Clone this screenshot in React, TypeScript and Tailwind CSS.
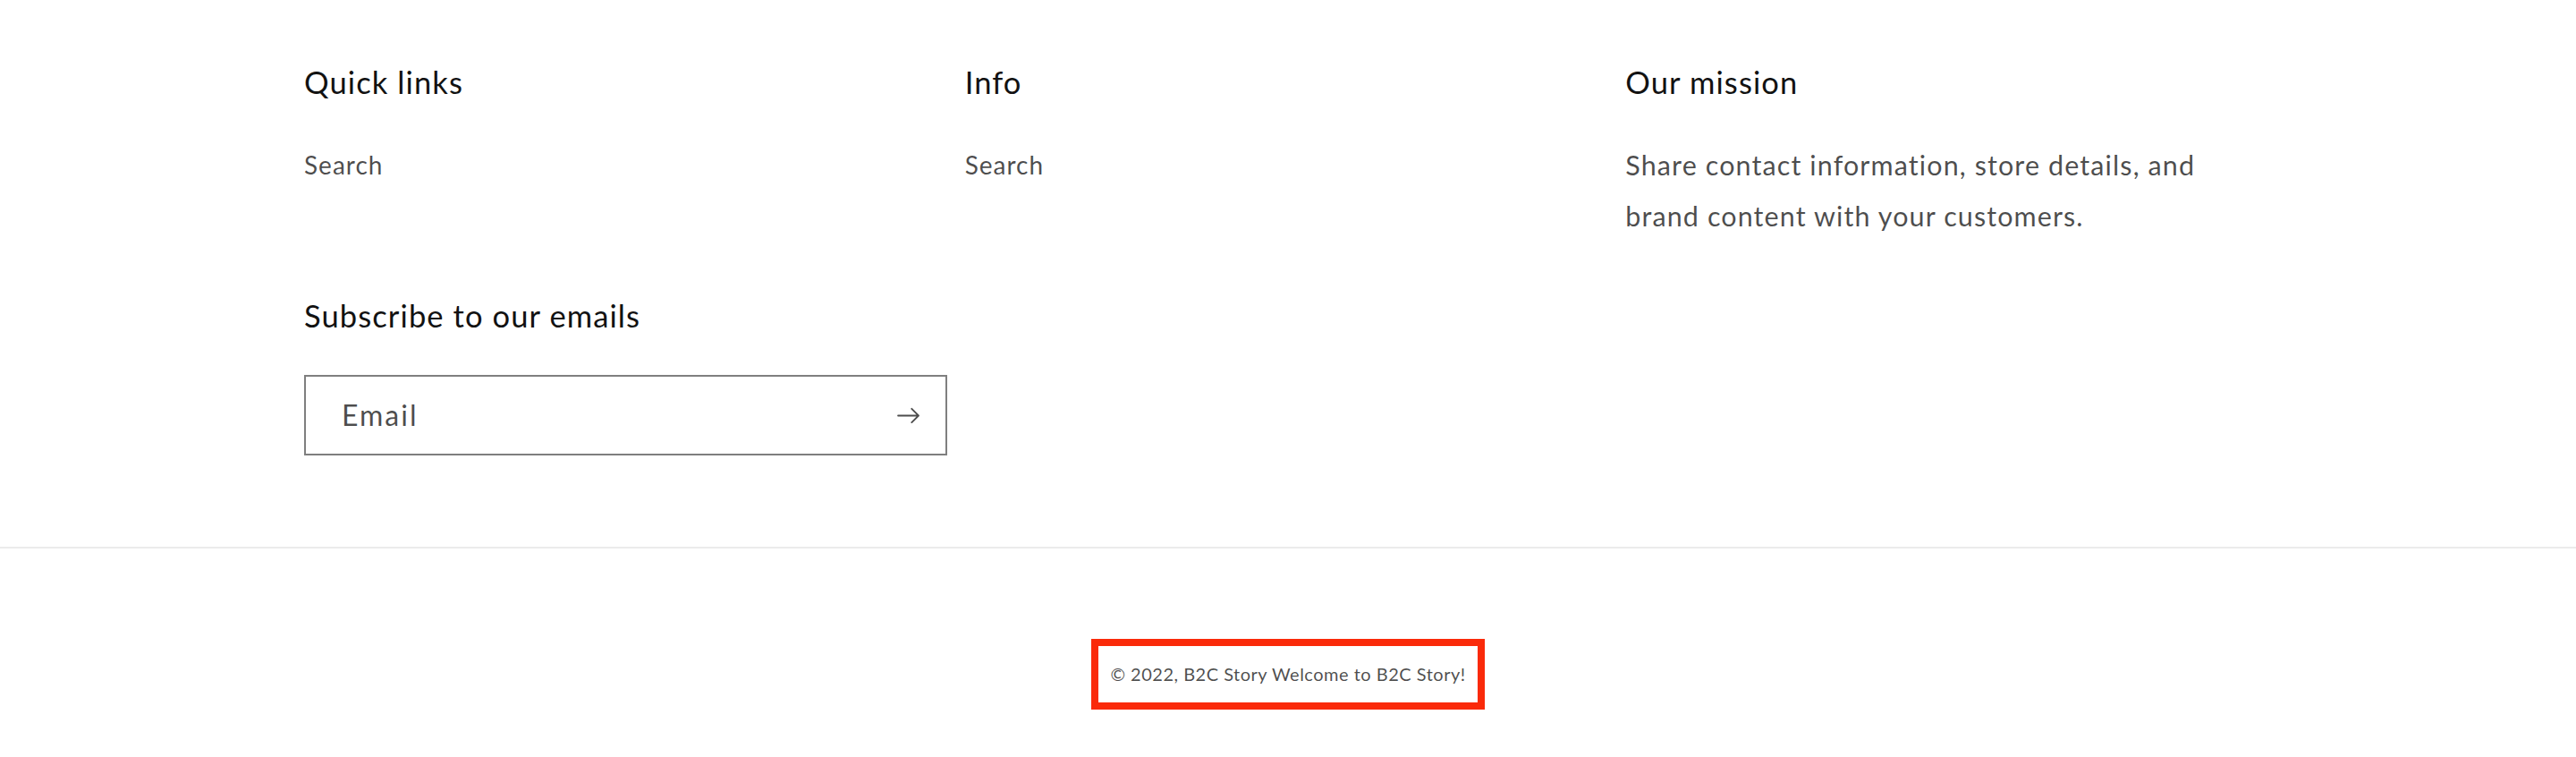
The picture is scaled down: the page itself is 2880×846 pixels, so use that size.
const ArrowIcon = () => (
  <svg viewBox="0 0 14 10" fill="none" className="w-[27px] h-[19px]">
    <path
      fillRule="evenodd"
      clipRule="evenodd"
      fill="currentColor"
      d="M8.537.808a.5.5 0 01.817-.162l4 4a.5.5 0 010 .708l-4 4a.5.5 0 11-.708-.708L11.793 5.5H1a.5.5 0 010-1h10.793L8.646 1.354a.5.5 0 01-.109-.546z"
    />
  </svg>
);

const App = () => {
  return (
    <footer className="w-full min-h-[846px] bg-white font-['Lato',sans-serif] text-[#121212]">
      <div className="mx-auto max-w-[2200px] pt-[68px]">
        <div className="grid grid-cols-3 gap-x-[16px]">
          {/* Quick links */}
          <div>
            <h2 className="text-[34.5px] leading-[48px] tracking-[1.1px]">Quick links</h2>
            <ul className="mt-[48px]">
              <li className="text-[28px] leading-[40px] tracking-[1px] text-[#121212bf]">Search</li>
            </ul>
          </div>

          {/* Info */}
          <div>
            <h2 className="text-[34.5px] leading-[48px] tracking-[1.1px]">Info</h2>
            <ul className="mt-[48px]">
              <li className="text-[28px] leading-[40px] tracking-[1px] text-[#121212bf]">Search</li>
            </ul>
          </div>

          {/* Our mission */}
          <div>
            <h2 className="text-[34.5px] leading-[48px] tracking-[1.1px]">Our mission</h2>
            <p className="mt-[40px] max-w-[680px] text-[30.5px] leading-[57px] tracking-[1.1px] text-[#121212bf]">
              Share contact information, store details, and brand content with your customers.
            </p>
          </div>
        </div>

        {/* Newsletter */}
        <div className="mt-[59px]">
          <h2 className="text-[34.5px] leading-[48px] tracking-[1.1px]">Subscribe to our emails</h2>
          <div className="mt-[42px] flex h-[90px] w-[719px] items-center justify-between border-2 border-[#7f7f7f] pl-[40px] pr-[28px]">
            <span className="text-[32px] tracking-[2px] text-[#121212bf]">Email</span>
            <span className="text-[#121212bf]">
              <ArrowIcon />
            </span>
          </div>
        </div>
      </div>

      <div className="mt-[102px] border-t-2 border-[#ebebeb]">
        <div className="flex justify-center pt-[101px] pb-[53px]">
          <div className="border-[8px] border-[#fa2a0a] px-[13px] py-[11px]">
            <p className="text-[20px] leading-[41px] tracking-[0.5px] text-[#121212bf]">
              © 2022, B2C Story Welcome to B2C Story!
            </p>
          </div>
        </div>
      </div>
    </footer>
  );
};

export default App;
